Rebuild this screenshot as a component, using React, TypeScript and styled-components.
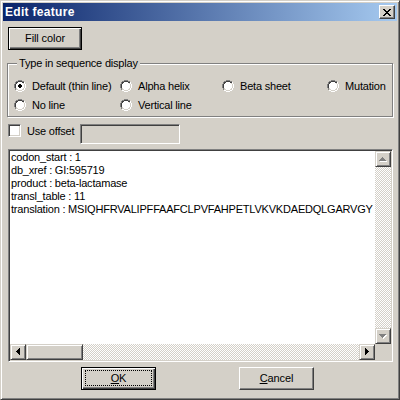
import React from 'react';
import styled, { createGlobalStyle, css } from 'styled-components';

const Global = createGlobalStyle`
  html, body { margin: 0; padding: 0; background: #d4d0c8; }
  body { font-family: "Liberation Sans", Arial, sans-serif; font-size: 11px; color: #000; letter-spacing: -0.2px; }
  * { box-sizing: border-box; }
`;

const Window = styled.div`
  width: 400px;
  height: 400px;
  background: #d4d0c8;
  border: 1px solid;
  border-color: #d4d0c8 #404040 #404040 #d4d0c8;
  box-shadow: inset 1px 1px #fff, inset -1px -1px #808080;
  padding: 2px;
  display: flex;
  flex-direction: column;
`;

const TitleBar = styled.div`
  height: 18px;
  flex: none;
  background: linear-gradient(to right, #0a246a, #a6caf0);
  display: flex;
  align-items: center;
  justify-content: space-between;
  padding: 0 2px 0 2px;
`;

const TitleText = styled.span`
  color: #fff;
  font-weight: bold;
  font-size: 12px;
  letter-spacing: 0.3px;
  font-family: "Liberation Sans", Arial, sans-serif;
`;

const CloseButton = styled.div`
  width: 16px;
  height: 14px;
  background: #d4d0c8;
  border: 1px solid;
  border-color: #fff #404040 #404040 #fff;
  box-shadow: inset -1px -1px #808080;
  display: flex;
  align-items: center;
  justify-content: center;
`;

const Body = styled.div`
  flex: 1;
  display: flex;
  flex-direction: column;
  padding: 0 0 0 5px;
`;

const Button = styled.button<{ $default?: boolean; $w?: number }>`
  width: ${p => p.$w ?? 75}px;
  height: 23px;
  padding: 0;
  background: #d4d0c8;
  font-family: "Liberation Sans", Arial, sans-serif;
  font-size: 11px;
  letter-spacing: -0.1px;
  color: #000;
  border: 1px solid;
  border-color: #fff #404040 #404040 #fff;
  box-shadow: inset -1px -1px #808080;
  display: flex;
  align-items: stretch;
  justify-content: center;
  ${p =>
    p.$default &&
    css`
      border-color: #000;
      box-shadow: inset 1px 1px #fff, inset -1px -1px #404040, inset -2px -2px #808080;
    `}
`;

const ButtonLabel = styled.span<{ $focus?: boolean }>`
  flex: 1;
  display: flex;
  align-items: center;
  justify-content: center;
  margin: 2px 3px 3px 3px;
  border: 1px dotted ${p => (p.$focus ? '#000' : 'transparent')};
`;

const FillButton = styled(Button)`
  margin-top: 6px;
`;

const Group = styled.div`
  position: relative;
  margin-top: 13px;
  margin-left: -1px;
  width: 386px;
  height: 54px;
  border: 1px solid #808080;
  box-shadow: inset 1px 1px #fff, 1px 1px #fff;
  padding: 12px 0 0 6px;
`;

const Legend = styled.span`
  position: absolute;
  left: 9px;
  top: -7px;
  padding: 0 2px;
  background: #d4d0c8;
  line-height: 13px;
`;

const RadioGrid = styled.div`
  display: grid;
  grid-template-columns: 106px 102px 105px 1fr;
  grid-auto-rows: 19px;
`;

const RadioItem = styled.label`
  display: flex;
  align-items: center;
  gap: 6px;
  white-space: nowrap;
`;

const OffsetRow = styled.div`
  margin-top: 7px;
  display: flex;
  align-items: flex-start;
  height: 20px;
`;

const CheckLabel = styled.label`
  width: 72px;
  height: 13px;
  display: flex;
  align-items: center;
  gap: 6px;
`;

const CheckBox = styled.span`
  width: 13px;
  height: 13px;
  flex: none;
  background: #fff;
  border: 1px solid;
  border-color: #808080 #fff #fff #808080;
  box-shadow: inset 1px 1px #404040, inset -1px -1px #d4d0c8;
`;

const OffsetInput = styled.div`
  width: 100px;
  height: 20px;
  background: #d4d0c8;
  border: 1px solid;
  border-color: #808080 #fff #fff #808080;
  box-shadow: inset 1px 1px #404040, inset -1px -1px #d4d0c8;
`;

const Memo = styled.div`
  margin-top: 5px;
  width: 385px;
  height: 213px;
  border: 1px solid;
  border-color: #808080 #fff #fff #808080;
  box-shadow: inset 1px 1px #404040, inset -1px -1px #d4d0c8;
  padding: 1px;
  display: grid;
  grid-template-columns: 1fr 16px;
  grid-template-rows: 1fr 16px;
`;

const MemoText = styled.div`
  background: #fff;
  padding: 0 1px;
  line-height: 13px;
  white-space: pre;
  overflow: hidden;
`;

const Line = styled.div``;

const VScroll = styled.div`
  display: flex;
  flex-direction: column;
`;

const HScroll = styled.div`
  display: flex;
`;

const Track = styled.div`
  flex: 1;
  background-color: #fff;
  background-image: repeating-conic-gradient(#d4d0c8 0 25%, #fff 0 50%);
  background-size: 2px 2px;
  display: flex;
`;

const ScrollBtn = styled.div`
  width: 16px;
  height: 16px;
  flex: none;
  background: #d4d0c8;
  border: 1px solid;
  border-color: #d4d0c8 #404040 #404040 #d4d0c8;
  box-shadow: inset 1px 1px #fff, inset -1px -1px #808080;
  display: flex;
  align-items: center;
  justify-content: center;
`;

const Thumb = styled.div<{ $w: number }>`
  width: ${p => p.$w}px;
  height: 16px;
  background: #d4d0c8;
  border: 1px solid;
  border-color: #d4d0c8 #404040 #404040 #d4d0c8;
  box-shadow: inset 1px 1px #fff, inset -1px -1px #808080;
`;

const Corner = styled.div`
  background: #d4d0c8;
`;

const ButtonRow = styled.div`
  margin-top: 5px;
  display: flex;
  gap: 83px;
  padding-left: 73px;
`;

const U = styled.span`
  text-decoration: underline;
`;

const Radio = ({ checked }: { checked?: boolean }) => (
  <svg width="12" height="12" viewBox="0 0 12 12" shapeRendering="crispEdges" style={{ flex: 'none' }}>
    <path d="M4 0h4v1H4zM2 1h2v1H2zM8 1h2v1H8zM1 2h1v2H1zM0 4h1v4H0zM1 8h1v2H1z" fill="#808080" />
    <path d="M4 1h4v1H4zM2 2h2v1H2zM8 2h2v1H8zM2 3h1v1H2zM1 4h1v4H1z" fill="#404040" />
    <path d="M10 2h1v2h-1zM11 4h1v4h-1zM10 8h1v2h-1zM8 10h2v1H8zM2 10h2v1H2zM4 11h4v1H4z" fill="#fff" />
    <path d="M9 3h1v1H9zM10 4h1v4h-1zM9 8h1v1H9zM8 9h1v1H8zM3 9h1v1H3zM4 10h4v1H4z" fill="#d4d0c8" />
    <path d="M4 2h4v1H4zM3 3h6v1H3zM2 4h8v4H2zM3 8h6v1H3zM4 9h4v1H4z" fill="#fff" />
    {checked && <path d="M5 4h2v1H5zM4 5h4v2H4zM5 7h2v1H5z" fill="#000" />}
  </svg>
);

const Arrow = ({ dir, disabled }: { dir: 'up' | 'down' | 'left' | 'right'; disabled?: boolean }) => {
  const paths: Record<string, string> = {
    up: 'M3 0h1v1H3zM2 1h3v1H2zM1 2h5v1H1zM0 3h7v1H0z',
    down: 'M0 0h7v1H0zM1 1h5v1H1zM2 2h3v1H2zM3 3h1v1H3z',
    left: 'M3 0h1v7H3zM2 1h1v5H2zM1 2h1v3H1zM0 3h1v1H0z',
    right: 'M0 0h1v7H0zM1 1h1v5H1zM2 2h1v3H2zM3 3h1v1H3z',
  };
  const vertical = dir === 'up' || dir === 'down';
  const w = vertical ? 7 : 4;
  const h = vertical ? 4 : 7;
  return (
    <svg width={w + 1} height={h + 1} viewBox={`0 0 ${w + 1} ${h + 1}`} shapeRendering="crispEdges">
      {disabled && <path d={paths[dir]} fill="#fff" transform="translate(1 1)" />}
      <path d={paths[dir]} fill={disabled ? '#808080' : '#000'} />
    </svg>
  );
};

export default function App() {
  return (
    <>
      <Global />
      <Window>
        <TitleBar>
          <TitleText>Edit feature</TitleText>
          <CloseButton>
            <svg width="8" height="7" viewBox="0 0 8 7" shapeRendering="crispEdges">
              <path d="M0 0h2v1H0zM6 0h2v1H6zM1 1h2v1H1zM5 1h2v1H5zM2 2h4v1H2zM3 3h2v1H3zM2 4h4v1H2zM1 5h2v1H1zM5 5h2v1H5zM0 6h2v1H0zM6 6h2v1H6z" fill="#000" />
            </svg>
          </CloseButton>
        </TitleBar>
        <Body>
          <FillButton $default $w={74}>
            <ButtonLabel>Fill color</ButtonLabel>
          </FillButton>
          <Group>
            <Legend>Type in sequence display</Legend>
            <RadioGrid>
              <RadioItem><Radio checked />Default (thin line)</RadioItem>
              <RadioItem><Radio />Alpha helix</RadioItem>
              <RadioItem><Radio />Beta sheet</RadioItem>
              <RadioItem><Radio />Mutation</RadioItem>
              <RadioItem><Radio />No line</RadioItem>
              <RadioItem><Radio />Vertical line</RadioItem>
            </RadioGrid>
          </Group>
          <OffsetRow>
            <CheckLabel><CheckBox />Use offset</CheckLabel>
            <OffsetInput />
          </OffsetRow>
          <Memo>
            <MemoText>
              <Line>codon_start : 1</Line>
              <Line>db_xref : GI:595719</Line>
              <Line>product : beta-lactamase</Line>
              <Line>transl_table : 11</Line>
              <Line>translation : MSIQHFRVALIPFFAAFCLPVFAHPETLVKVKDAEDQLGARVGY</Line>
            </MemoText>
            <VScroll>
              <ScrollBtn><Arrow dir="up" disabled /></ScrollBtn>
              <Track />
              <ScrollBtn><Arrow dir="down" disabled /></ScrollBtn>
            </VScroll>
            <HScroll>
              <ScrollBtn><Arrow dir="left" /></ScrollBtn>
              <Track>
                <Thumb $w={57} />
              </Track>
              <ScrollBtn><Arrow dir="right" /></ScrollBtn>
            </HScroll>
            <Corner />
          </Memo>
          <ButtonRow>
            <Button $default>
              <ButtonLabel $focus><U>O</U>K</ButtonLabel>
            </Button>
            <Button>
              <ButtonLabel><U>C</U>ancel</ButtonLabel>
            </Button>
          </ButtonRow>
        </Body>
      </Window>
    </>
  );
}
